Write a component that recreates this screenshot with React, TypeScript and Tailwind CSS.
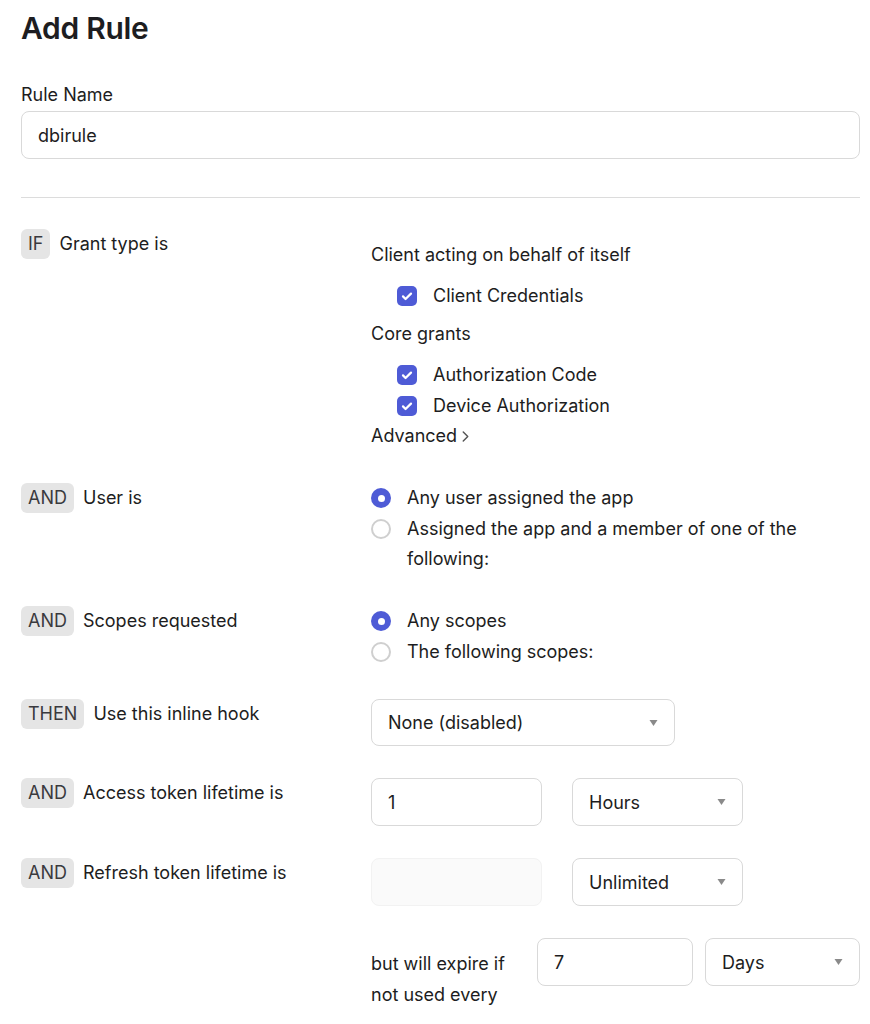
import type { ReactNode } from "react";

function Badge({ children }: { children: ReactNode }) {
  return (
    <span className="h-[30px] shrink-0 rounded-md bg-[#e5e5e5] px-[7px] text-[18px] leading-[30px] text-[#3a3a3e]">
      {children}
    </span>
  );
}

function CheckedBox() {
  return (
    <span className="flex h-5 w-5 shrink-0 items-center justify-center rounded-[5px] bg-[#4e5bd6]">
      <svg viewBox="0 0 20 20" className="h-4 w-4" fill="none" stroke="white" strokeWidth={2.8} aria-hidden>
        <path strokeLinecap="round" strokeLinejoin="round" d="M5 10.5l3.2 3.2L15 7" />
      </svg>
    </span>
  );
}

function Radio({ checked }: { checked?: boolean }) {
  return checked ? (
    <span className="mt-[5px] flex h-5 w-5 shrink-0 items-center justify-center rounded-full bg-[#4e5bd6]">
      <span className="h-[7px] w-[7px] rounded-full bg-white" />
    </span>
  ) : (
    <span className="mt-[5px] h-5 w-5 shrink-0 rounded-full border-2 border-[#cfcfcf] bg-white" />
  );
}

function Caret() {
  return (
    <svg viewBox="0 0 8 6" className="h-[6px] w-[9px]" aria-hidden>
      <path d="M0 0h8L4 6z" fill="#8a8a8a" />
    </svg>
  );
}

function Select({ value, size }: { value: string; size: string }) {
  return (
    <div className={`flex ${size} items-center justify-between rounded-lg border border-[#d9d9d9] bg-white pl-4 pr-4`}>
      <span>{value}</span>
      <Caret />
    </div>
  );
}

function TextBox({ value, width, disabled }: { value?: string; width: string; disabled?: boolean }) {
  return (
    <div
      className={`flex h-[48px] ${width} items-center rounded-lg border px-4 ${
        disabled ? "border-[#f2f2f2] bg-[#fafafa]" : "border-[#d9d9d9] bg-white"
      }`}
    >
      {value}
    </div>
  );
}

function Condition({ tag, label, children }: { tag: string; label: string; children: ReactNode }) {
  return (
    <div className="grid grid-cols-[350px_1fr]">
      <div className="flex items-start gap-[9px]">
        <Badge>{tag}</Badge>
        <span className="leading-[30px]">{label}</span>
      </div>
      <div>{children}</div>
    </div>
  );
}

export default function App() {
  return (
    <div className="h-[1024px] w-full overflow-hidden bg-white pl-[21px] pr-[10px] pt-[10px] font-['Inter',sans-serif] text-[18px] text-[#1d1d21]">
      <h1 className="text-[30px] font-semibold leading-[36px] tracking-[-0.01em]">Add Rule</h1>

      <label className="mt-[37px] block leading-6">Rule Name</label>
      <div className="mt-1 flex h-[48px] items-center rounded-lg border border-[#d9d9d9] px-4">dbirule</div>

      <div className="mt-[38px] border-t border-[#dcdcdc]" />

      <div className="mt-[31px] flex flex-col gap-8">
        <Condition tag="IF" label="Grant type is">
          <div className="pt-[11px]">
            <p className="leading-[30px]">Client acting on behalf of itself</p>
            <ul className="mt-[10px] pl-[26px]">
              <li className="flex h-[31px] items-center gap-4">
                <CheckedBox />
                Client Credentials
              </li>
            </ul>
            <p className="mt-2 leading-[30px]">Core grants</p>
            <ul className="mt-[10px] pl-[26px]">
              <li className="flex h-[31px] items-center gap-4">
                <CheckedBox />
                Authorization Code
              </li>
              <li className="flex h-[31px] items-center gap-4">
                <CheckedBox />
                Device Authorization
              </li>
            </ul>
            <p className="flex items-center gap-1 leading-[30px]">
              Advanced
              <svg viewBox="0 0 10 14" className="h-[13px] w-[9px]" fill="none" stroke="#555" strokeWidth={1.6} aria-hidden>
                <path strokeLinecap="round" strokeLinejoin="round" d="M2.5 2l5 5-5 5" />
              </svg>
            </p>
          </div>
        </Condition>

        <Condition tag="AND" label="User is">
          <ul className="flex flex-col gap-px leading-[30px]">
            <li className="flex items-start gap-4">
              <Radio checked />
              <span>Any user assigned the app</span>
            </li>
            <li className="flex items-start gap-4">
              <Radio />
              <span>Assigned the app and a member of one of the following:</span>
            </li>
          </ul>
        </Condition>

        <Condition tag="AND" label="Scopes requested">
          <ul className="flex flex-col gap-px leading-[30px]">
            <li className="flex items-start gap-4">
              <Radio checked />
              <span>Any scopes</span>
            </li>
            <li className="flex items-start gap-4">
              <Radio />
              <span>The following scopes:</span>
            </li>
          </ul>
        </Condition>

        <Condition tag="THEN" label="Use this inline hook">
          <Select value="None (disabled)" size="h-[47px] w-[304px]" />
        </Condition>

        <Condition tag="AND" label="Access token lifetime is">
          <div className="flex gap-[30px]">
            <TextBox value="1" width="w-[171px]" />
            <Select value="Hours" size="h-[48px] w-[171px]" />
          </div>
        </Condition>

        <Condition tag="AND" label="Refresh token lifetime is">
          <div className="flex gap-[30px]">
            <TextBox width="w-[171px]" disabled />
            <Select value="Unlimited" size="h-[48px] w-[171px]" />
          </div>
        </Condition>

        <div className="grid grid-cols-[350px_1fr]">
          <div />
          <div className="flex items-start">
            <p className="mr-4 w-[150px] pt-[10px] leading-[31px]">but will expire if not used every</p>
            <TextBox value="7" width="w-[156px]" />
            <div className="ml-3">
              <Select value="Days" size="h-[48px] w-[155px]" />
            </div>
          </div>
        </div>
      </div>
    </div>
  );
}
